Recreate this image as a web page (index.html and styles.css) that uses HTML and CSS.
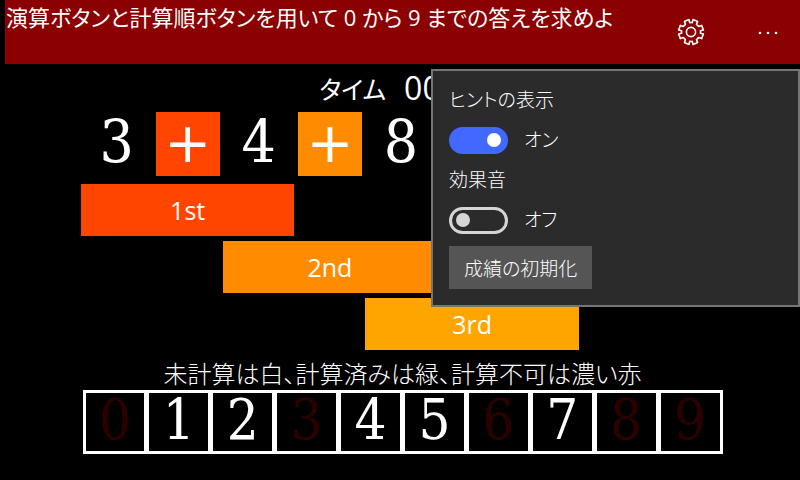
FILE: index.html
```html
<!DOCTYPE html>
<html lang="ja">

<head>
    <meta charset="UTF-8">
    <meta name="viewport" content="width=device-width, initial-scale=1.0">
    <title>演算パズル</title>
    <link rel="stylesheet" href="styles.css">
</head>

<body>
    <header class="app-bar">
        <h1 class="title">演算ボタンと計算順ボタンを用いて 0 から 9 までの答えを求めよ</h1>
        <div class="commands">
            <button class="command" type="button" aria-label="設定">
                <svg width="28" height="28" viewBox="0 0 28 28" fill="none" stroke="#fff" stroke-width="1.6" stroke-linejoin="round">
                    <path d="M12 1.6 L12.7 4.6 A9.4 9.4 0 0 1 15.3 4.6 L16 1.6 L20.6 3.4 L19.5 6.4 A9.4 9.4 0 0 1 21.6 8.5 L24.6 7.4 L26.4 12 L23.4 12.7 A9.4 9.4 0 0 1 23.4 15.3 L26.4 16 L24.6 20.6 L21.6 19.5 A9.4 9.4 0 0 1 19.5 21.6 L20.6 24.6 L16 26.4 L15.3 23.4 A9.4 9.4 0 0 1 12.7 23.4 L12 26.4 L7.4 24.6 L8.5 21.6 A9.4 9.4 0 0 1 6.4 19.5 L3.4 20.6 L1.6 16 L4.6 15.3 A9.4 9.4 0 0 1 4.6 12.7 L1.6 12 L3.4 7.4 L6.4 8.5 A9.4 9.4 0 0 1 8.5 6.4 L7.4 3.4 Z"/>
                    <circle cx="14" cy="14" r="4.6"/>
                </svg>
            </button>
            <button class="command" type="button" aria-label="その他">
                <svg width="28" height="28" viewBox="0 0 28 28" fill="#fff">
                    <circle cx="6" cy="15" r="1.3"/>
                    <circle cx="14" cy="15" r="1.3"/>
                    <circle cx="22" cy="15" r="1.3"/>
                </svg>
            </button>
        </div>
    </header>

    <main class="game">
        <p class="time">タイム <span class="clock">00:00</span></p>

        <div class="formula">
            <span class="number">3</span>
            <button class="operator first" type="button">+</button>
            <span class="number">4</span>
            <button class="operator second" type="button">+</button>
            <span class="number">8</span>
        </div>

        <div class="orders">
            <button class="order order-1 first" type="button">1st</button>
            <button class="order order-2 second" type="button">2nd</button>
            <button class="order order-3 third" type="button">3rd</button>
        </div>

        <p class="legend">未計算は白、計算済みは緑、計算不可は濃い赤</p>
        <div class="answers">
            <span class="answer impossible">0</span>
            <span class="answer">1</span>
            <span class="answer">2</span>
            <span class="answer impossible">3</span>
            <span class="answer">4</span>
            <span class="answer">5</span>
            <span class="answer impossible">6</span>
            <span class="answer">7</span>
            <span class="answer impossible">8</span>
            <span class="answer impossible">9</span>
        </div>
    </main>

    <section class="flyout">
        <label class="setting-name" for="hint">ヒントの表示</label>
        <div class="setting">
            <input class="toggle" type="checkbox" id="hint" checked>
            <span>オン</span>
        </div>
        <label class="setting-name" for="sound">効果音</label>
        <div class="setting">
            <input class="toggle" type="checkbox" id="sound">
            <span>オフ</span>
        </div>
        <button class="reset" type="button">成績の初期化</button>
    </section>
</body>

</html>
```

FILE: styles.css
```css
* {
    box-sizing: border-box;
}
body {
    margin: 0;
    padding-left: 5px;
    position: relative;
    background-color: #000;
    color: #fff;
    font-family: "Open Sans", "Noto Sans CJK JP", sans-serif;
    font-feature-settings: "palt";
}
button {
    border: none;
    padding: 0;
    color: #fff;
    font-family: inherit;
    font-feature-settings: inherit;
    cursor: pointer;
}
.app-bar {
    display: flex;
    justify-content: space-between;
    height: 64px;
    background-color: #8b0000;
}
.title {
    margin: 0;
    padding-left: 1px;
    font-size: 22px;
    font-weight: 400;
    line-height: 34px;
    white-space: nowrap;
}
.commands {
    display: flex;
    flex-shrink: 0;
}
.command {
    display: flex;
    justify-content: center;
    align-items: center;
    width: 77px;
    background: none;
}
.command:last-child {
    width: 64px;
    margin-left: 7px;
}
.game {
    display: flex;
    flex-direction: column;
    align-items: center;
}
.time {
    display: flex;
    align-items: center;
    gap: 18px;
    height: 48px;
    margin: 0;
    font-size: 25px;
}
.clock {
    font-size: 32px;
    line-height: 48px;
}
.formula,
.orders {
    display: grid;
    grid-template-columns: repeat(9, 1fr);
    width: 100%;
    max-width: 643px;
    padding-right: 3px;
}
.formula {
    justify-items: center;
}
.number,
.answer {
    font-family: "DejaVu Serif Condensed", "DejaVu Serif", serif;
    text-align: center;
}
.number {
    font-size: 60px;
    line-height: 60px;
}
.operator {
    width: 64px;
    height: 64px;
    padding-bottom: 2px;
    font-family: "DejaVu Sans", sans-serif;
    font-size: 56px;
    line-height: 60px;
}
.first {
    background-color: #ff4500;
}
.second {
    background-color: #ff8c00;
}
.third {
    background-color: #ffa500;
}
.orders {
    row-gap: 5px;
    margin-top: 8px;
}
.order {
    height: 52px;
    font-size: 25px;
    line-height: 52px;
}
.order-1 {
    grid-column: 1 / 4;
}
.order-2 {
    grid-column: 3 / 6;
}
.order-3 {
    grid-column: 5 / 8;
}
.legend {
    margin: 8px 0 0;
    font-size: 24px;
    font-weight: 300;
    line-height: 32px;
}
.answers {
    display: grid;
    grid-template-columns: repeat(10, 1fr);
    gap: 5px;
    width: 100%;
    max-width: 640px;
    padding: 3px;
    background-color: #fff;
}
.answer {
    height: 58px;
    background-color: #000;
    font-size: 56px;
    line-height: 54px;
}
.impossible {
    color: #2d0000;
}
.flyout {
    position: absolute;
    top: 69px;
    right: 0;
    width: 369px;
    padding: 15px 16px 16px;
    border: 2px solid #767676;
    background-color: #2b2b2b;
    font-size: 19px;
    font-weight: 300;
}
.setting-name {
    display: block;
    line-height: 28px;
}
.setting {
    display: flex;
    align-items: center;
    gap: 16px;
    height: 52px;
    line-height: 24px;
}
.toggle {
    appearance: none;
    display: flex;
    align-items: center;
    width: 59px;
    height: 27px;
    margin: 0;
    padding: 0 4px;
    border: 3px solid #d5d5d5;
    border-radius: 14px;
}
.toggle::before {
    content: "";
    width: 14px;
    height: 14px;
    border-radius: 50%;
    background-color: #d5d5d5;
}
.toggle:checked {
    justify-content: flex-end;
    border-color: #4169ff;
    background-color: #4169ff;
}
.toggle:checked::before {
    background-color: #fff;
}
.reset {
    height: 43px;
    padding: 0 15px;
    background-color: #555;
    font-size: 19px;
    font-weight: 300;
}
```
